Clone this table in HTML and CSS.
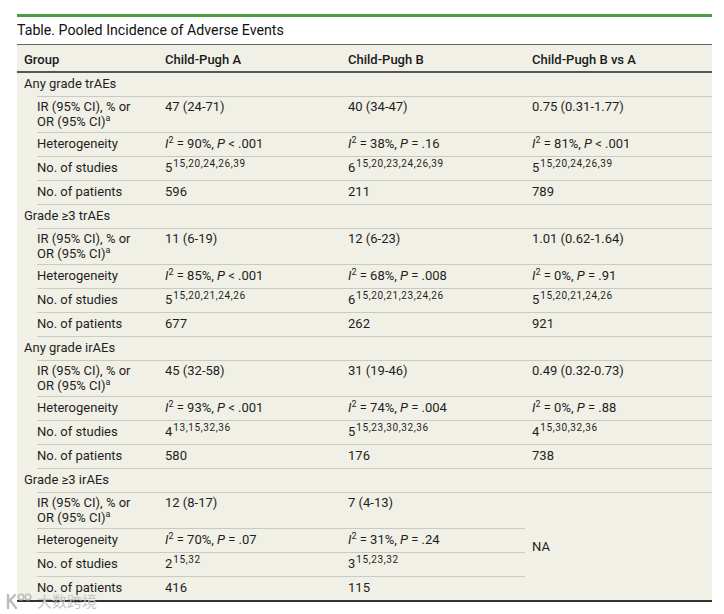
FILE: index.html
```html
<!DOCTYPE html>
<html lang="en">
<head>
<meta charset="utf-8">
<title>Pooled Incidence of Adverse Events</title>
<link rel="stylesheet" href="styles.css">
</head>
<body>
<div class="page">
  <div class="rule-top"></div>
  <h1 class="title">Table. Pooled Incidence of Adverse Events</h1>
  <table class="tbl">
    <colgroup>
      <col class="c-ind"><col class="c-lab"><col class="c-a"><col class="c-b"><col class="c-c">
    </colgroup>
    <thead>
      <tr><th colspan="2">Group</th><th>Child-Pugh A</th><th>Child-Pugh B</th><th>Child-Pugh B vs A</th></tr>
    </thead>
    <tbody>
      <tr class="grp"><td colspan="5">Any grade trAEs</td></tr>
      <tr class="ir"><td class="ind"></td><td class="lab">IR (95% CI), % or<br>OR (95% CI)<sup class="fn">a</sup></td><td>47 (24-71)</td><td>40 (34-47)</td><td>0.75 (0.31-1.77)</td></tr>
      <tr><td class="ind"></td><td class="lab">Heterogeneity</td><td><i>I</i><sup class="sq">2</sup> = 90%, <i>P</i> &lt; .001</td><td><i>I</i><sup class="sq">2</sup> = 38%, <i>P</i> = .16</td><td><i>I</i><sup class="sq">2</sup> = 81%, <i>P</i> &lt; .001</td></tr>
      <tr><td class="ind"></td><td class="lab">No. of studies</td><td>5<sup class="refs">15,20,24,26,39</sup></td><td>6<sup class="refs">15,20,23,24,26,39</sup></td><td>5<sup class="refs">15,20,24,26,39</sup></td></tr>
      <tr><td class="ind"></td><td class="lab">No. of patients</td><td>596</td><td>211</td><td>789</td></tr>

      <tr class="grp"><td colspan="5">Grade ≥3 trAEs</td></tr>
      <tr class="ir"><td class="ind"></td><td class="lab">IR (95% CI), % or<br>OR (95% CI)<sup class="fn">a</sup></td><td>11 (6-19)</td><td>12 (6-23)</td><td>1.01 (0.62-1.64)</td></tr>
      <tr><td class="ind"></td><td class="lab">Heterogeneity</td><td><i>I</i><sup class="sq">2</sup> = 85%, <i>P</i> &lt; .001</td><td><i>I</i><sup class="sq">2</sup> = 68%, <i>P</i> = .008</td><td><i>I</i><sup class="sq">2</sup> = 0%, <i>P</i> = .91</td></tr>
      <tr><td class="ind"></td><td class="lab">No. of studies</td><td>5<sup class="refs">15,20,21,24,26</sup></td><td>6<sup class="refs">15,20,21,23,24,26</sup></td><td>5<sup class="refs">15,20,21,24,26</sup></td></tr>
      <tr><td class="ind"></td><td class="lab">No. of patients</td><td>677</td><td>262</td><td>921</td></tr>

      <tr class="grp"><td colspan="5">Any grade irAEs</td></tr>
      <tr class="ir"><td class="ind"></td><td class="lab">IR (95% CI), % or<br>OR (95% CI)<sup class="fn">a</sup></td><td>45 (32-58)</td><td>31 (19-46)</td><td>0.49 (0.32-0.73)</td></tr>
      <tr><td class="ind"></td><td class="lab">Heterogeneity</td><td><i>I</i><sup class="sq">2</sup> = 93%, <i>P</i> &lt; .001</td><td><i>I</i><sup class="sq">2</sup> = 74%, <i>P</i> = .004</td><td><i>I</i><sup class="sq">2</sup> = 0%, <i>P</i> = .88</td></tr>
      <tr><td class="ind"></td><td class="lab">No. of studies</td><td>4<sup class="refs">13,15,32,36</sup></td><td>5<sup class="refs">15,23,30,32,36</sup></td><td>4<sup class="refs">15,30,32,36</sup></td></tr>
      <tr><td class="ind"></td><td class="lab">No. of patients</td><td>580</td><td>176</td><td>738</td></tr>

      <tr class="grp"><td colspan="5">Grade ≥3 irAEs</td></tr>
      <tr class="ir"><td class="ind"></td><td class="lab">IR (95% CI), % or<br>OR (95% CI)<sup class="fn">a</sup></td><td>12 (8-17)</td><td>7 (4-13)</td><td class="na" rowspan="4">NA</td></tr>
      <tr><td class="ind"></td><td class="lab">Heterogeneity</td><td><i>I</i><sup class="sq">2</sup> = 70%, <i>P</i> = .07</td><td><i>I</i><sup class="sq">2</sup> = 31%, <i>P</i> = .24</td></tr>
      <tr><td class="ind"></td><td class="lab">No. of studies</td><td>2<sup class="refs">15,32</sup></td><td>3<sup class="refs">15,23,32</sup></td></tr>
      <tr class="last"><td class="ind"></td><td class="lab">No. of patients</td><td>416</td><td>115</td></tr>
    </tbody>
  </table>
  <div class="watermark" aria-hidden="true">
    <svg class="wm-logo" width="30" height="20" viewBox="0 0 30 20">
      <path d="M4 4 L4 17 M4 11 L11 4 M6 9 L12 17" fill="none" stroke="#bdbdbd" stroke-width="2.4" stroke-linecap="round"/>
      <circle cx="17" cy="6" r="2.8" fill="none" stroke="#bdbdbd" stroke-width="1.6"/>
      <circle cx="24" cy="6" r="2.8" fill="none" stroke="#bdbdbd" stroke-width="1.6"/>
    </svg>
    <span class="wm-text">大数跨境</span>
  </div>
</div>
</body>
</html>
```

FILE: styles.css
```css
body {
  margin: 0;
  background: #ffffff;
  font-family: Roboto, "Liberation Sans", sans-serif;
  color: #1e1e1e;
}

.page {
  position: relative;
  width: 695px;
  padding: 14px 12px 12px 17px;
}

.rule-top {
  height: 3px;
  background: #4b9c46;
}

.title {
  margin: 0;
  height: 27px;
  font-size: 14.2px;
  line-height: 27px;
  font-weight: 400;
  color: #111111;
}

.tbl {
  width: 695px;
  table-layout: fixed;
  border-collapse: collapse;
  background: #f1f0e6;
  border-top: 1px solid #666666;
  border-bottom: 2px solid #333333;
  font-size: 13px;
  line-height: 15px;
}

.c-ind { width: 20px; }
.c-lab { width: 121px; }
.c-a { width: 183px; }
.c-b { width: 184px; }
.c-c { width: 187px; }

.tbl th {
  text-align: left;
  font-weight: 500;
  padding: 7px 0 4px 7px;
  border-bottom: 2px solid #555555;
  color: #1a1a1a;
}

.tbl td {
  padding: 3px 0 5px 7px;
  border-bottom: 1px solid #cbcabf;
  vertical-align: middle;
  white-space: nowrap;
}

.tbl td.ind {
  padding: 0;
  border-bottom: none;
}

.tbl td.lab {
  padding-left: 0;
}

.tbl tr.ir td {
  padding-top: 2px;
  padding-bottom: 3px;
  vertical-align: top;
}

.tbl tr.ir td.ind {
  padding: 0;
}

.tbl tr.grp td {
  border-bottom: none;
  padding-bottom: 6px;
  background: linear-gradient(#cbcabf, #cbcabf) right bottom / calc(100% - 20px) 1px no-repeat;
}

.tbl tr.last td {
  border-bottom: none;
}

.tbl td.na {
  border-bottom: none;
  vertical-align: middle;
}

.tbl tr.ir td.na {
  vertical-align: middle;
  padding-top: 2px;
}

.fn {
  font-size: 9px;
  line-height: 0;
  vertical-align: 5px;
}

.sq {
  font-size: 9px;
  line-height: 0;
  vertical-align: 5px;
}

.refs {
  font-size: 10px;
  line-height: 0;
  vertical-align: 5px;
  letter-spacing: 0.6px;
  margin-left: 1px;
}

.watermark {
  position: absolute;
  left: 4px;
  top: 590px;
  z-index: 2;
  display: flex;
  align-items: center;
  gap: 3px;
  pointer-events: none;
}

.wm-text {
  font-family: "Noto Sans CJK SC", sans-serif;
  font-size: 15px;
  font-weight: 400;
  line-height: 22px;
  color: #c6c6c6;
}
```
